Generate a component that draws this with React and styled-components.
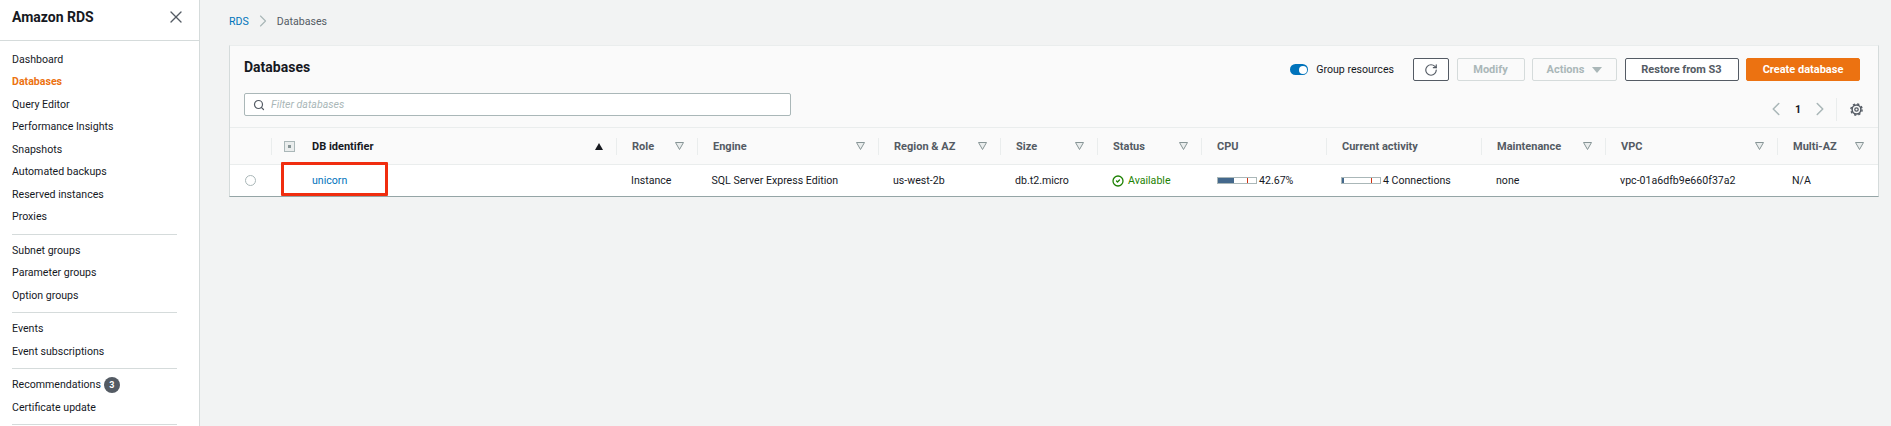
import React from 'react';
import styled, { createGlobalStyle } from 'styled-components';
import { X, Search, RotateCw, ChevronLeft, ChevronRight, CircleCheck } from 'lucide-react';

const GlobalStyle = createGlobalStyle`
  html, body {
    margin: 0;
    height: 100%;
    overflow: hidden;
    background: #f2f3f3;
    color: #16191f;
    font-family: Roboto, "Liberation Sans", sans-serif;
    font-size: 10.6px;
  }
  * { box-sizing: border-box; }
`;

const COLUMNS = '42px 345px 81px 181px 122px 97px 104px 125px 155px 124px 172px 1fr';

const navSections = [
  ['Dashboard', 'Databases', 'Query Editor', 'Performance Insights', 'Snapshots', 'Automated backups', 'Reserved instances', 'Proxies'],
  ['Subnet groups', 'Parameter groups', 'Option groups'],
  ['Events', 'Event subscriptions'],
  ['Recommendations', 'Certificate update'],
];

const Page = styled.div`
  display: flex;
  height: 426px;
  overflow: hidden;
`;

const Sidebar = styled.aside`
  flex: 0 0 200px;
  background: #fff;
  border-right: 1px solid #d5dbdb;
  overflow: hidden;
`;

const SidebarHeader = styled.div`
  height: 41px;
  padding: 0 13px 6px 12px;
  display: flex;
  align-items: center;
  justify-content: space-between;
  border-bottom: 1px solid #d5dbdb;
`;

const SidebarTitle = styled.div`
  font-size: 14px;
  font-weight: 700;
`;

const CloseIcon = styled(X)`
  width: 20px;
  height: 20px;
  color: #545b64;
  stroke-width: 1.6;
`;

const Nav = styled.nav`
  padding-top: 6.75px;
`;

const NavItem = styled.div`
  height: 22.5px;
  padding-left: 12px;
  display: flex;
  align-items: center;
  gap: 3px;
  color: ${(p) => (p.$active ? '#ec7211' : '#16191f')};
  font-weight: ${(p) => (p.$active ? 700 : 400)};
`;

const NavDivider = styled.hr`
  width: 165px;
  height: 1px;
  margin: 6px 0 4px 12px;
  border: 0;
  background: #d5dbdb;
`;

const Badge = styled.span`
  width: 16px;
  height: 16px;
  border-radius: 50%;
  background: #545b64;
  color: #fff;
  font-size: 9px;
  font-weight: 700;
  display: flex;
  align-items: center;
  justify-content: center;
`;

const Main = styled.main`
  flex: 1;
  padding: 0 12px 0 29px;
  min-width: 0;
`;

const Breadcrumbs = styled.div`
  height: 45px;
  padding-bottom: 3px;
  display: flex;
  align-items: center;
  color: #545b64;
`;

const CrumbLink = styled.span`
  color: #0073bb;
`;

const CrumbIcon = styled(ChevronRight)`
  width: 20px;
  height: 20px;
  margin: 0 4px;
  color: #aab7b8;
  stroke-width: 1.4;
`;

const Card = styled.section`
  background: #fff;
  border: 1px solid #eaeded;
  border-left-color: #d5dbdb;
  border-right-color: #d5dbdb;
  border-bottom: 1px solid #95a5a6;
  height: 152px;
`;

const CardHeader = styled.div`
  height: 82px;
  background: #fafafa;
  border-bottom: 1px solid #eaeded;
  padding: 0 18px 0 14px;
  display: grid;
  grid-template-columns: 547px 1fr;
  grid-template-rows: 47px 35px;
`;

const CardTitle = styled.h2`
  margin: 0;
  padding-bottom: 5px;
  align-self: center;
  font-size: 14px;
  font-weight: 700;
`;

const Actions = styled.div`
  display: flex;
  align-items: center;
  justify-content: flex-end;
`;

const ToggleLabel = styled.span`
  margin: 0 19px 0 8px;
  color: #16191f;
`;

const Toggle = styled.span`
  position: relative;
  width: 18px;
  height: 11px;
  border-radius: 6px;
  background: #0073bb;
  &::after {
    content: '';
    position: absolute;
    right: 1.5px;
    top: 1.5px;
    width: 8px;
    height: 8px;
    border-radius: 50%;
    background: #fff;
  }
`;

const Button = styled.button`
  height: 23px;
  width: ${(p) => p.$w}px;
  margin-left: ${(p) => p.$gap ?? 7.5}px;
  padding: 0;
  display: inline-flex;
  align-items: center;
  justify-content: center;
  gap: 8px;
  border-radius: 2px;
  border: 1px solid ${(p) => (p.$primary ? '#ec7211' : p.$disabled ? '#d5dbdb' : '#545b64')};
  background: ${(p) => (p.$primary ? '#ec7211' : p.$disabled ? '#fafafa' : '#fff')};
  color: ${(p) => (p.$primary ? '#fff' : p.$disabled ? '#aab7b8' : '#545b64')};
  font: 700 11px Roboto, "Liberation Sans", sans-serif;
`;

const Caret = styled.span`
  width: 0;
  height: 0;
  border-left: 5px solid transparent;
  border-right: 5px solid transparent;
  border-top: 6px solid #aab7b8;
`;

const FilterBox = styled.div`
  height: 23px;
  border: 1px solid #aab7b8;
  border-radius: 2px;
  background: #fff;
  display: flex;
  align-items: center;
  padding-left: 8px;
  gap: 6px;
  color: #aab7b8;
  font-style: italic;
`;

const SearchIcon = styled(Search)`
  width: 12px;
  height: 12px;
  color: #545b64;
  stroke-width: 2.4;
`;

const Pager = styled.div`
  display: flex;
  align-items: center;
  justify-content: flex-end;
  margin-top: -3px;
  color: #aab7b8;
`;

const PagerNumber = styled.span`
  width: 22px;
  text-align: center;
  color: #16191f;
  font-weight: 700;
`;

const PagerChevron = styled.span`
  display: flex;
  svg {
    width: 22px;
    height: 22px;
    stroke-width: 1.7;
  }
`;

const PagerDivider = styled.span`
  width: 1px;
  height: 23px;
  margin: 0 13px 0 5px;
  background: #eaeded;
`;

const GearIcon = styled.svg`
  width: 13px;
  height: 13px;
  margin-right: -3px;
  color: #545b64;
`;

const HeadRow = styled.div`
  display: grid;
  grid-template-columns: ${COLUMNS};
  height: 37px;
  background: #fafafa;
  border-bottom: 1px solid #eaeded;
`;

const HeadCell = styled.div`
  position: relative;
  display: flex;
  align-items: center;
  justify-content: space-between;
  padding: 0 14.5px 0 ${(p) => p.$pl ?? 15}px;
  font-size: 11px;
  font-weight: 700;
  color: ${(p) => (p.$dark ? '#16191f' : '#545b64')};
  &::after {
    content: ${(p) => (p.$last ? 'none' : "''")};
    position: absolute;
    right: 0;
    top: 10px;
    bottom: 9px;
    width: 1px;
    background: #eaeded;
  }
`;

const ExpandBox = styled.span`
  width: 11px;
  height: 11px;
  margin-right: 17px;
  border: 1px solid #aab7b8;
  background: #eaeded;
  display: flex;
  align-items: center;
  justify-content: center;
  &::before {
    content: '';
    width: 3px;
    height: 3px;
    background: #879596;
  }
`;

const IdentifierHead = styled.div`
  flex: 1;
  display: flex;
  align-items: center;
`;

const SortArrow = styled.span`
  width: 0;
  height: 0;
  border-left: 4.5px solid transparent;
  border-right: 4.5px solid transparent;
  border-bottom: 7px solid #16191f;
`;

const FilterTriangle = styled.svg`
  flex: none;
  width: 9px;
  height: 8px;
`;

const BodyRow = styled.div`
  display: grid;
  grid-template-columns: ${COLUMNS};
  height: 31px;
  align-items: center;
`;

const BodyCell = styled.div`
  position: relative;
  padding-left: ${(p) => p.$pl ?? 14}px;
  display: flex;
  align-items: center;
  white-space: nowrap;
`;

const Radio = styled.span`
  width: 11px;
  height: 11px;
  border-radius: 50%;
  border: 1px solid #aab7b8;
  background: #fff;
`;

const DbLink = styled.span`
  color: #0073bb;
`;

// red annotation drawn over the row, it is not part of the table
const Highlight = styled.span`
  position: absolute;
  left: 9px;
  top: -12px;
  width: 107px;
  height: 34px;
  border: 3px solid #f02d0f;
  border-radius: 1px;
`;

const StatusText = styled.span`
  display: flex;
  align-items: center;
  gap: 4px;
  color: #1d8102;
`;

const CheckIcon = styled(CircleCheck)`
  width: 12px;
  height: 12px;
  stroke-width: 2.6;
`;

const Meter = styled.span`
  position: relative;
  width: 40px;
  height: 7px;
  margin-right: 2px;
  border: 1px solid #aab7b8;
  background: #fff;
`;

const MeterFill = styled.span`
  position: absolute;
  left: 0;
  top: 0;
  bottom: 0;
  background: #44688c;
`;

const MeterTick = styled.span`
  position: absolute;
  right: 8px;
  top: 0;
  bottom: 0;
  width: 1px;
  background: #d13212;
`;

const Filter = () => (
  <FilterTriangle viewBox="0 0 9 8">
    <path d="M0.5 0.5h8L4.5 7.5z" fill="#eaeded" stroke="#879596" strokeWidth="1" />
  </FilterTriangle>
);

const Gear = () => (
  <GearIcon viewBox="0 0 13 13" fill="none" stroke="currentColor">
    <circle cx="6.5" cy="6.5" r="4.4" strokeWidth="1.5" />
    <circle cx="6.5" cy="6.5" r="1.7" strokeWidth="1.3" />
    <circle cx="6.5" cy="6.5" r="5.6" strokeWidth="1.4" strokeDasharray="2.2 2.2" />
  </GearIcon>
);

const headers = [
  { label: 'Role' },
  { label: 'Engine' },
  { label: 'Region & AZ' },
  { label: 'Size' },
  { label: 'Status' },
  { label: 'CPU', plain: true },
  { label: 'Current activity', plain: true },
  { label: 'Maintenance' },
  { label: 'VPC' },
  { label: 'Multi-AZ', last: true },
];

const App = () => (
  <>
    <GlobalStyle />
    <Page>
      <Sidebar>
        <SidebarHeader>
          <SidebarTitle>Amazon RDS</SidebarTitle>
          <CloseIcon />
        </SidebarHeader>
        <Nav>
          {navSections.map((items) => (
            <React.Fragment key={items[0]}>
              {items.map((item) => (
                <NavItem key={item} $active={item === 'Databases'}>
                  {item}
                  {item === 'Recommendations' && <Badge>3</Badge>}
                </NavItem>
              ))}
              <NavDivider />
            </React.Fragment>
          ))}
        </Nav>
      </Sidebar>
      <Main>
        <Breadcrumbs>
          <CrumbLink>RDS</CrumbLink>
          <CrumbIcon />
          Databases
        </Breadcrumbs>
        <Card>
          <CardHeader>
            <CardTitle>Databases</CardTitle>
            <Actions>
              <Toggle />
              <ToggleLabel>Group resources</ToggleLabel>
              <Button $w={36} $gap={0}>
                <RotateCw size={14} />
              </Button>
              <Button $w={68} $disabled>Modify</Button>
              <Button $w={85} $disabled>
                Actions <Caret />
              </Button>
              <Button $w={114}>Restore from S3</Button>
              <Button $w={114} $primary>Create database</Button>
            </Actions>
            <FilterBox>
              <SearchIcon />
              Filter databases
            </FilterBox>
            <Pager>
              <PagerChevron><ChevronLeft /></PagerChevron>
              <PagerNumber>1</PagerNumber>
              <PagerChevron><ChevronRight /></PagerChevron>
              <PagerDivider />
              <Gear />
            </Pager>
          </CardHeader>
          <HeadRow>
            <HeadCell />
            <HeadCell $dark $pl={12}>
              <IdentifierHead>
                <ExpandBox />
                DB identifier
              </IdentifierHead>
              <SortArrow />
            </HeadCell>
            {headers.map((h) => (
              <HeadCell key={h.label} $last={h.last}>
                {h.label}
                {!h.plain && <Filter />}
              </HeadCell>
            ))}
          </HeadRow>
          <BodyRow>
            <BodyCell $pl={15}><Radio /></BodyCell>
            <BodyCell $pl={40}>
              <DbLink>unicorn</DbLink>
              <Highlight />
            </BodyCell>
            <BodyCell>Instance</BodyCell>
            <BodyCell $pl={13.5}>SQL Server Express Edition</BodyCell>
            <BodyCell>us-west-2b</BodyCell>
            <BodyCell>db.t2.micro</BodyCell>
            <BodyCell>
              <StatusText><CheckIcon />Available</StatusText>
            </BodyCell>
            <BodyCell $pl={15}>
              <Meter>
                <MeterFill style={{ width: '42.67%' }} />
                <MeterTick />
              </Meter>
              42.67%
            </BodyCell>
            <BodyCell $pl={14}>
              <Meter>
                <MeterFill style={{ width: '5%' }} />
                <MeterTick />
              </Meter>
              4 Connections
            </BodyCell>
            <BodyCell>none</BodyCell>
            <BodyCell>vpc-01a6dfb9e660f37a2</BodyCell>
            <BodyCell>N/A</BodyCell>
          </BodyRow>
        </Card>
      </Main>
    </Page>
  </>
);

export default App;
